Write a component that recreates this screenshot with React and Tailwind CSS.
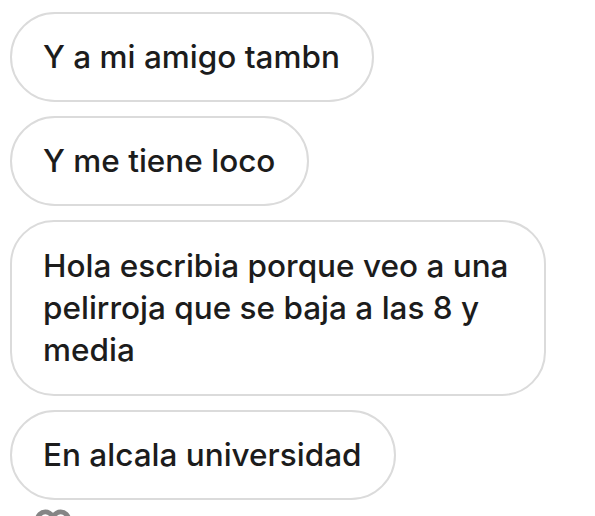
export default function App() {
  const msgs = [
    "Y a mi amigo tambn",
    "Y me tiene loco",
    "Hola escribia porque veo a una pelirroja que se baja a las 8 y media",
    "En alcala universidad",
  ];
  return (
    <div
      className="w-[595px] h-[516px] overflow-hidden bg-white pl-[10px] pt-[12px] flex flex-col items-start gap-[14px]"
      style={{ fontFamily: "Inter, 'Noto Sans', sans-serif" }}
    >
      {msgs.map((m, i) => (
        <div
          key={i}
          className={
            i === 2
              ? "shrink-0 w-[536px] border-2 border-[#dbdbdb] rounded-[44px] pl-[31px] pr-[20px] py-[23px] text-[31.5px] font-medium leading-[42px] text-[#1c1c1c]"
              : "shrink-0 border-2 border-[#dbdbdb] rounded-full pl-[31px] pr-[32px] h-[90px] flex items-center text-[31.5px] font-medium leading-[42px] text-[#1c1c1c]"
          }
        >
          {m}
        </div>
      ))}
      <svg
        width="38"
        height="34"
        viewBox="0 0 24 22"
        className="ml-[24px] -mt-[6px] shrink-0"
        fill="none"
        stroke="#858585"
        strokeWidth="3.2"
      >
        <path d="M12 20.5S2 14.5 2 7.5A5 5 0 0 1 7 2.5c2.2 0 3.8 1.3 5 3 1.2-1.7 2.8-3 5-3a5 5 0 0 1 5 5c0 7-10 13-10 13z" />
      </svg>
    </div>
  );
}
